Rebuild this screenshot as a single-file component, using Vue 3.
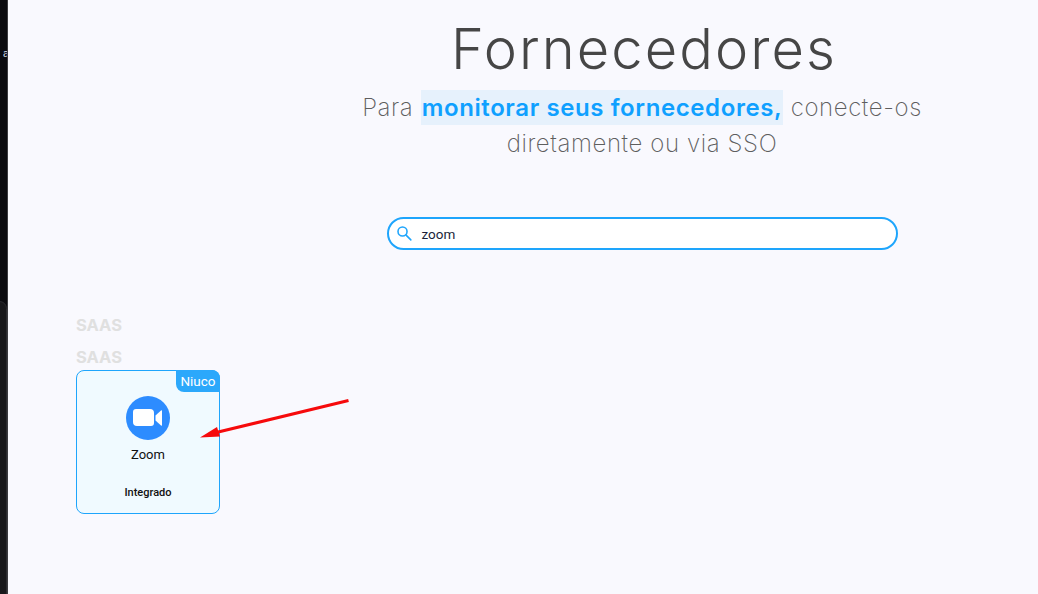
<script setup>
const resultados = [
  { nome: 'Zoom', selo: 'Niuco', estado: 'Integrado' }
];
</script>

<template>
  <div class="pagina">
    <aside class="lateral">
      <span class="letra">a</span>
      <div class="painel"></div>
    </aside>

    <main class="conteudo">
      <header class="cabecalho">
        <h1>Fornecedores</h1>
        <p>
          Para <mark>monitorar seus fornecedores,</mark> conecte-os<br>
          diretamente ou via SSO
        </p>
        <div class="busca">
          <svg class="lupa" viewBox="0 0 24 24" width="19" height="19">
            <circle cx="9.5" cy="9.5" r="5.7" fill="none" stroke="#1ea5fc" stroke-width="2" />
            <path d="M14 14l6 6" stroke="#1ea5fc" stroke-width="2" stroke-linecap="round" />
          </svg>
          <span class="termo">zoom</span>
        </div>
      </header>

      <section class="lista">
        <h2>SAAS</h2>
        <h2>SAAS</h2>
        <div class="cartoes">
          <article v-for="item in resultados" :key="item.nome" class="cartao">
            <span class="selo">{{ item.selo }}</span>
            <svg class="logo" viewBox="0 0 44 44" width="44" height="44">
              <circle cx="22" cy="22" r="22" fill="#2d8cff" />
              <path d="M7 16a3 3 0 0 1 3-3h14a4 4 0 0 1 4 4v10a3 3 0 0 1-3 3H11a4 4 0 0 1-4-4z" fill="#fff" />
              <path d="M29.500 19.500l5.500-5c.6-.5 1-.3 1 .5v14c0 .8-.4 1-1 .5l-5.500-5z" fill="#fff" />
            </svg>
            <span class="nome">{{ item.nome }}</span>
            <span class="estado">{{ item.estado }}</span>
          </article>
        </div>
      </section>

      <svg class="seta" viewBox="0 0 1038 594" width="1038" height="594">
        <path d="M348.500 400.500L214 433" stroke="#f60a0c" stroke-width="3" fill="none" />
        <path d="M200 437.500L217 427L220 436.500z" fill="#f60a0c" />
      </svg>
    </main>
  </div>
</template>

<style>
html, body {
  margin: 0;
  background: #f9f9fe;
}
</style>

<style scoped>
.pagina {
  display: flex;
  width: 1038px;
  height: 594px;
  overflow: hidden;
  background: #f9f9fe;
  font-family: Inter, "Liberation Sans", sans-serif;
  position: relative;
}

/* Faixa escura que sobra da janela de trás */
.lateral {
  flex: 0 0 7px;
  background: #0b0b0f;
  border-right: 1px solid #3c3c40;
  position: relative;
  overflow: hidden;
}

.letra {
  position: absolute;
  left: 3px;
  top: 47px;
  font: 11px "Liberation Sans", sans-serif;
  color: #d5dbe6;
}

.painel {
  position: absolute;
  left: -8px;
  right: 0;
  top: 301px;
  bottom: -10px;
  background: #18181b;
  border: 1px solid #2c2c30;
  border-radius: 8px;
}

.conteudo {
  flex: 1;
  min-width: 0;
}

.cabecalho {
  margin-left: 238px;
  display: flex;
  flex-direction: column;
  align-items: center;
}

h1 {
  margin: 16px 0 0 4px;
  font-size: 56px;
  line-height: 66px;
  font-weight: 300;
  color: #464646;
  letter-spacing: 2.05px;
}

p {
  margin: 8px 0 0;
  font-size: 24px;
  line-height: 36px;
  font-weight: 200;
  letter-spacing: 0.6px;
  color: #5e5e5e;
  text-align: center;
  white-space: nowrap;
}

mark {
  background: #e6f1fc;
  color: #0fa0ff;
  font-weight: 600;
  padding: 3px 1px;
}

.busca {
  margin-top: 55px;
  width: 511px;
  height: 33px;
  box-sizing: border-box;
  border: 2px solid #1ea5fc;
  border-radius: 17px;
  background: #fff;
  display: flex;
  align-items: center;
  padding-left: 6px;
  gap: 8px;
}

.lupa {
  flex: none;
}

.termo {
  font: 13.5px Roboto, sans-serif;
  color: #1b1f3a;
}

.lista {
  margin: 66px 0 0 68px;
}

h2 {
  margin: 0 0 14px;
  font-size: 16.5px;
  line-height: 18px;
  font-weight: 700;
  color: #e0e0e0;
}

h2:nth-of-type(2) {
  margin-bottom: 4px;
}

.cartoes {
  display: flex;
}

.cartao {
  position: relative;
  width: 144px;
  height: 144px;
  box-sizing: border-box;
  border: 1px solid #1ea5fc;
  border-radius: 8px;
  background: #f0faff;
  display: flex;
  flex-direction: column;
  align-items: center;
  padding-top: 25px;
  font-family: Roboto, sans-serif;
  color: #111;
}

.selo {
  position: absolute;
  top: -1px;
  right: -1px;
  height: 22px;
  line-height: 22px;
  padding: 0 4.500px;
  background: #2ba8fb;
  color: #fff;
  font-size: 13.500px;
  border-radius: 0 8px 0 8px;
}

.nome {
  margin-top: 7px;
  font-size: 13px;
  line-height: 16px;
}

.estado {
  margin-top: 23px;
  font-size: 11px;
  line-height: 14px;
  font-weight: 500;
}

.seta {
  position: absolute;
  left: 0;
  top: 0;
  pointer-events: none;
}
</style>
